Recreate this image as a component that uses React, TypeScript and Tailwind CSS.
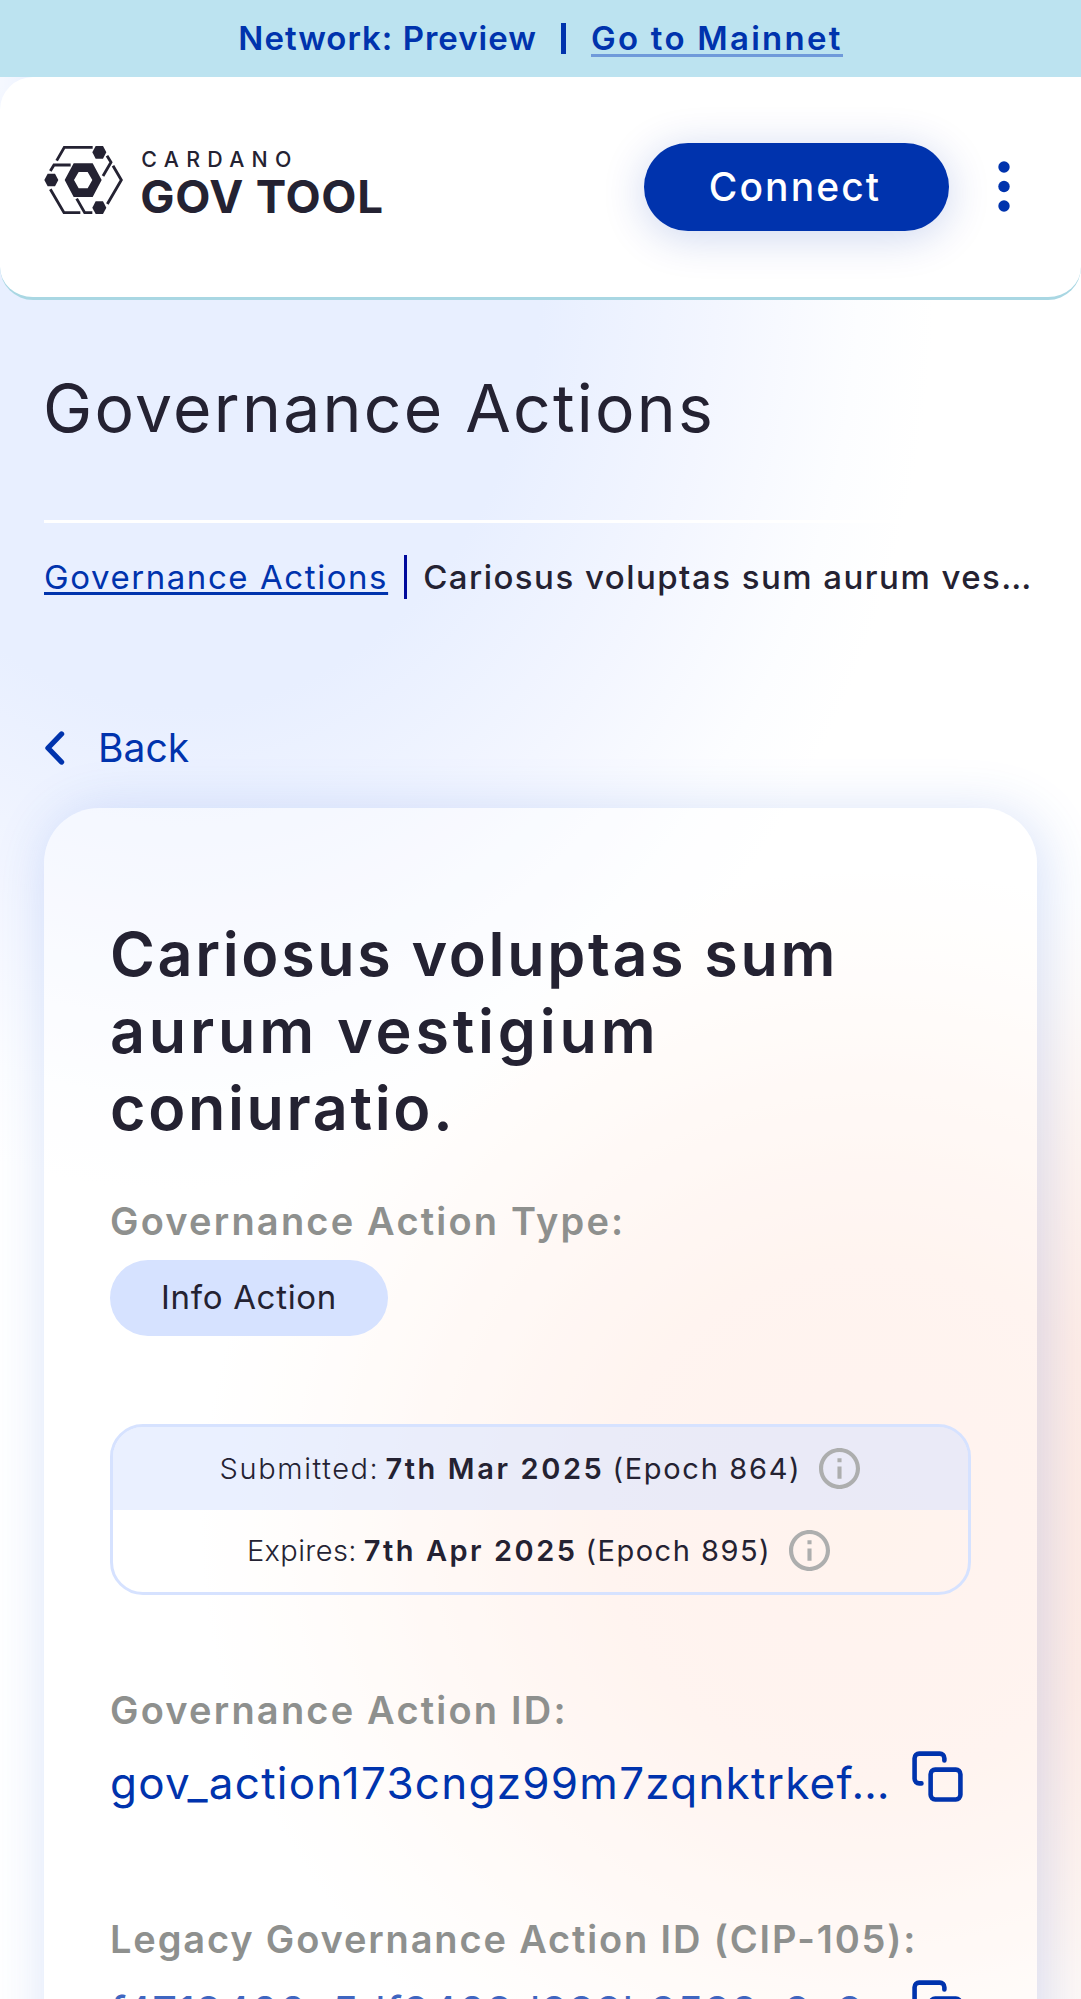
import type { ReactNode } from "react";

function Logo() {
  return (
    <svg viewBox="42 48 1050 246" className="h-[82px] w-[350px]" fill="#242232" aria-label="Cardano GovTool">
      <g fill="none" stroke="#242232" strokeWidth="8.5">
        <path d="M80 92 103 52H188" />
        <path d="M61 123 72 105H122" />
        <path d="M231 77 243 97 219 138" />
        <path d="M249 107 274 150 232 222" />
        <path d="M61 178 102 248H151" />
        <path d="M140 206 164 248H187" />
      </g>
      <path d="M187 67 197 48H219L229 67 219 86H197Z" />
      <path d="M43 150 53 131H75L85 150 75 169H53Z" />
      <path d="M187 233 197 214H219L229 233 219 252H197Z" />
      <path fillRule="evenodd" d="M104 150 131 100H188L215 150 188 201H131ZM132 150 146 175H173L187 150 173 126H146Z" />
      <text x="334" y="111" fontSize="64" fontWeight="500" textLength="450" fontFamily="Inter, sans-serif">
        CARDANO
      </text>
      <text x="331" y="249" fontSize="137" fontWeight="650" textLength="728" fontFamily="Inter, sans-serif">
        GOV TOOL
      </text>
    </svg>
  );
}

function InfoIcon() {
  return (
    <svg viewBox="2 2 20 20" className="ml-[18px] size-[41px] shrink-0" fill="#adaeae">
      <path d="M11 7h2v2h-2zm0 4h2v6h-2zm1-9C6.48 2 2 6.48 2 12s4.48 10 10 10 10-4.48 10-10S17.52 2 12 2zm0 18c-4.41 0-8-3.59-8-8s3.59-8 8-8 8 3.59 8 8-3.59 8-8 8z" />
    </svg>
  );
}

function CopyIcon() {
  return (
    <svg
      viewBox="0 0 24 24"
      className="-mt-1 mr-[6px] size-[55px] shrink-0"
      fill="none"
      stroke="#0033ad"
      strokeWidth="2"
      strokeLinecap="round"
      strokeLinejoin="round"
    >
      <rect x="9" y="9" width="13" height="13" rx="2" />
      <path d="M5 15H4a2 2 0 0 1-2-2V4a2 2 0 0 1 2-2h9a2 2 0 0 1 2 2v1" />
    </svg>
  );
}

function Label({ children }: { children: ReactNode }) {
  return (
    <div className="text-[38px] leading-[44px] font-semibold tracking-[2.2px] whitespace-nowrap text-[#8e908e]">
      {children}
    </div>
  );
}

export default function App() {
  return (
    <div className="h-[1999px] w-[1081px] overflow-hidden bg-white bg-[radial-gradient(ellipse_50px_120px_at_0px_80px,#ffffff99_0%,#ffffff00_100%),radial-gradient(ellipse_755px_930px_at_180px_260px,#e8efff_0%,#e8efff_48%,#f3f6ff_71%,#fcfdff_90%,#ffffff00_100%),radial-gradient(ellipse_670px_650px_at_870px_1520px,#ffebe2_0%,#ffede6_40%,#fff5f0_66%,#fffcfa_87%,#ffffff_100%)] font-['Inter',sans-serif] text-[#242232]">
      <div className="flex h-[77px] items-center justify-center bg-[#bce3f0] text-[33px] font-semibold whitespace-nowrap text-[#0033ad]">
        <span className="tracking-[1px]">Network: Preview</span>
        <span className="mr-[25px] ml-6 h-[31px] w-[5px] bg-[#0033ad]" />
        <a className="mb-[3px] border-b-3 border-[#6f9ada] pt-[4px] leading-[32px] tracking-[2.25px]">Go to Mainnet</a>
      </div>

      <header className="flex h-[223px] items-center rounded-[33px] border-b-3 border-[#a9d7e3] bg-white pl-11">
        <Logo />
        <button className="ml-[249.5px] h-[88px] w-[305px] rounded-full bg-[#0033ad] pr-0.5 text-[39px] font-medium tracking-[2.1px] text-white shadow-[0_6px_44px_rgba(0,51,173,0.2)]">
          Connect
        </button>
        <svg viewBox="0 0 12 52" className="ml-[49px] h-[52px] w-3" fill="#0033ad">
          <circle cx="6" cy="6" r="5.7" />
          <circle cx="6" cy="25.5" r="5.7" />
          <circle cx="6" cy="45" r="5.7" />
        </svg>
      </header>

      <main className="px-11">
        <h1 className="mt-[65px] -ml-px text-[66px] leading-[87px] tracking-[2.25px]">Governance Actions</h1>
        <div className="mt-[68px] h-[3px] bg-white" />

        <nav className="mt-8 flex h-11 items-center text-[33px] leading-[44px] whitespace-nowrap">
          <a className="tracking-[1.57px] text-[#0033ad] underline decoration-[3px] underline-offset-[3px]">
            Governance Actions
          </a>
          <span className="mr-4 ml-4 h-11 w-[3px] bg-[#000a9c]" />
          <span className="font-medium tracking-[1.47px]">Cariosus voluptas sum aurum ves…</span>
        </nav>

        <a className="mt-[127px] flex h-11 items-center text-[39px] text-[#0033ad]">
          <svg viewBox="0 0 22 36" className="mr-8 h-9 w-[22px]" fill="none" stroke="#0033ad" strokeWidth="5.4" strokeLinecap="round" strokeLinejoin="round">
            <path d="M17.5 4 4 18 17.5 32" />
          </svg>
          Back
        </a>

        <section className="mt-[38px] h-[1400px] rounded-[55px] bg-white/40 px-[66px] pt-[108px] shadow-[5.5px_5.5px_55px_#2f62dc33]">
          <h2 className="text-[61px] leading-[77px] font-semibold tracking-[2.65px] whitespace-nowrap">
            Cariosus voluptas sum
            <span className="block tracking-[3.8px]">aurum vestigium</span>
            coniuratio.
          </h2>

          <div className="mt-[52px]">
            <Label>Governance Action Type:</Label>
          </div>
          <div className="mt-[17px] flex h-[76px] w-[278px] items-center justify-center rounded-full bg-[#d6e2ff] text-[33px] tracking-[0.7px]">
            Info Action
          </div>

          <div className="mt-[88px] h-[171px] overflow-hidden rounded-[33px] border-3 border-[#d6e2ff] text-[29px] whitespace-nowrap">
            <div className="flex h-1/2 items-center justify-center bg-[#d6e2ff]/50 pr-px">
              <span className="font-light tracking-[1.6px]">Submitted:</span>
              <span className="ml-[6px] font-semibold tracking-[2.6px]">7th Mar 2025</span>
              <span className="ml-[8px] tracking-[1.7px]">(Epoch 864)</span>
              <InfoIcon />
            </div>
            <div className="flex h-1/2 items-center justify-center pr-1">
              <span className="font-light tracking-[0.4px]">Expires:</span>
              <span className="ml-[7px] font-semibold tracking-[2.5px]">7th Apr 2025</span>
              <span className="ml-[8px] tracking-[1.5px]">(Epoch 895)</span>
              <InfoIcon />
            </div>
          </div>

          <div className="mt-[93px]">
            <Label>Governance Action ID:</Label>
          </div>
          <div className="mt-[21px] flex h-[60px] items-start justify-between text-[44px] leading-[60px] whitespace-nowrap text-[#0033ad]">
            <span className="tracking-[1.25px]">gov_action173cngz99m7zqnktrkef…</span>
            <CopyIcon />
          </div>

          <div className="mt-[104px]">
            <Label>
              <span className="tracking-[1.85px]">Legacy Governance Action ID (CIP-105):</span>
            </Label>
          </div>
          <div className="mt-[21px] flex h-[60px] items-start justify-between text-[44px] leading-[60px] whitespace-nowrap text-[#0033ad]">
            <span className="tracking-[0.1px] opacity-75">f4719400c5df8409d888b8589c8c8…</span>
            <CopyIcon />
          </div>
        </section>
      </main>
    </div>
  );
}
